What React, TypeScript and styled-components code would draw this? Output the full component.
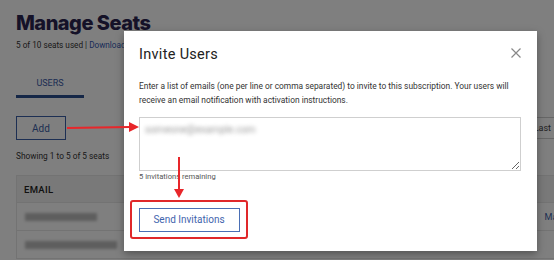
import React from "react";
import styled, { createGlobalStyle } from "styled-components";

const Global = createGlobalStyle`
  html, body { margin: 0; padding: 0; }
  body { font-family: "Roboto", "Liberation Sans", sans-serif; background: #fff; width: 554px; height: 260px; overflow: hidden; }
  * { box-sizing: border-box; }
`;

const Stage = styled.div`
  position: relative;
  width: 554px;
  height: 260px;
  overflow: hidden;
`;

const Page = styled.div`
  padding: 10px 16px 0 16px;
  display: flex;
  flex-direction: column;
  color: #222;
`;

const Title = styled.h1`
  margin: 0;
  font-family: "Inter", sans-serif;
  font-weight: 800;
  font-size: 20px;
  line-height: 26px;
  letter-spacing: -0.5px;
  color: #2b2550;
`;

const Meta = styled.div`
  margin-top: 3px;
  font-size: 8.2px;
  line-height: 12px;
  color: #333;
  a { color: #3358b0; text-decoration: none; }
`;

const Tabs = styled.div`
  margin-top: 26px;
  display: flex;
`;

const Tab = styled.div`
  width: 68px;
  padding: 0 0 6px;
  text-align: center;
  font-size: 9px;
  line-height: 12px;
  color: #3a5ca8;
  border-bottom: 3px solid #2a4f8f;
`;

const Toolbar = styled.div`
  margin-top: 18px;
  display: flex;
  justify-content: space-between;
  align-items: center;
`;

const OutlineButton = styled.button`
  width: 50px;
  height: 24px;
  background: #fff;
  border: 1px solid #3b5ea6;
  color: #3b5ea6;
  font-family: "Roboto", sans-serif;
  font-size: 10px;
  padding: 0;
`;

const PagerButton = styled.div`
  height: 22px;
  padding: 5px 6px;
  border: 1px solid #ccc;
  font-size: 9px;
  color: #444;
  margin-right: -20px;
`;

const Showing = styled.div`
  margin-top: 10px;
  font-size: 8.3px;
  line-height: 12px;
  color: #333;
`;

const TableCard = styled.div`
  margin-top: 13px;
  margin-right: -40px;
  border: 1px solid #e6e6e6;
  display: flex;
  flex-direction: column;
`;

const HeaderRow = styled.div`
  height: 26px;
  background: #f2f2f2;
  padding: 0 7px;
  display: flex;
  align-items: center;
  font-size: 9.5px;
  font-weight: 500;
  color: #222;
  letter-spacing: 0.3px;
`;

const Row = styled.div`
  height: 28px;
  border-top: 1px solid #e6e6e6;
  padding: 0 8px;
  display: flex;
  align-items: center;
  justify-content: space-between;
`;

const Blurred = styled.span<{ $w: number }>`
  display: inline-block;
  width: ${(p) => p.$w}px;
  height: 8px;
  background: #bdbdbd;
  filter: blur(1.5px);
`;

const Manage = styled.span`
  font-size: 9px;
  color: #3b5ea6;
  margin-right: -8px;
`;

const Overlay = styled.div`
  position: absolute;
  inset: 0;
  background: rgba(0, 0, 0, 0.5);
`;

const Modal = styled.div`
  position: absolute;
  left: 124px;
  top: 31px;
  width: 413px;
  height: 220px;
  background: #fff;
  box-shadow: 0 3px 8px rgba(0, 0, 0, 0.35);
  padding: 14px 16px 0 15px;
  display: flex;
  flex-direction: column;
`;

const ModalHead = styled.div`
  display: flex;
  justify-content: space-between;
  align-items: center;
`;

const ModalTitle = styled.h2`
  margin: 0;
  font-family: "Roboto", sans-serif;
  font-weight: 400;
  font-size: 14.5px;
  line-height: 20px;
  color: #222;
  letter-spacing: 0.3px;
`;

const Close = styled.button`
  border: 0;
  background: none;
  padding: 0;
  width: 12px;
  height: 12px;
  margin-right: -1px;
  margin-top: -5px;
  display: flex;
`;

const Desc = styled.p`
  margin: 14px 0 0;
  font-size: 8.4px;
  line-height: 14px;
  color: #333;
`;

const Area = styled.textarea`
  margin-top: 10px;
  width: 382px;
  height: 54px;
  border: 1px solid #cfcfcf;
  resize: vertical;
  padding: 6px 5px;
  font-family: "Roboto", sans-serif;
  font-size: 10px;
  color: transparent;
  text-shadow: 0 0 4px rgba(0, 0, 0, 0.4);
  outline: none;
`;

const Remaining = styled.div`
  margin-top: 1px;
  font-size: 7.6px;
  color: #555;
`;

const Highlight = styled.div`
  margin-top: 19px;
  margin-left: -9px;
  width: 118px;
  height: 39px;
  border: 2px solid #e0282a;
  border-radius: 3px;
  display: flex;
  align-items: center;
  justify-content: center;
`;

const PrimaryOutline = styled.button`
  width: 101px;
  height: 24px;
  background: #fff;
  border: 1px solid #4a6fb5;
  color: #3f64ad;
  font-family: "Roboto", sans-serif;
  font-size: 10px;
  padding: 0;
`;

const Annotation = styled.svg`
  position: absolute;
  left: 0;
  top: 0;
  pointer-events: none;
`;

export default function App() {
  return (
    <Stage>
      <Global />
      <Page>
        <Title>Manage Seats</Title>
        <Meta>
          5 of 10 seats used | <a>Download CSV</a>
        </Meta>
        <Tabs>
          <Tab>USERS</Tab>
        </Tabs>
        <Toolbar>
          <OutlineButton>Add</OutlineButton>
          <PagerButton>Last</PagerButton>
        </Toolbar>
        <Showing>Showing 1 to 5 of 5 seats</Showing>
        <TableCard>
          <HeaderRow>EMAIL</HeaderRow>
          <Row>
            <Blurred $w={72} />
            <Manage>Manage</Manage>
          </Row>
          <Row>
            <Blurred $w={92} />
          </Row>
        </TableCard>
      </Page>
      <Overlay />
      <Modal>
        <ModalHead>
          <ModalTitle>Invite Users</ModalTitle>
          <Close aria-label="Close">
            <svg width="12" height="12" viewBox="0 0 12 12">
              <path d="M1.5 1.5 L10.5 10.5 M10.5 1.5 L1.5 10.5" stroke="#888" strokeWidth="1.2" />
            </svg>
          </Close>
        </ModalHead>
        <Desc>
          Enter a list of emails (one per line or comma separated) to invite to this subscription. Your users will
          receive an email notification with activation instructions.
        </Desc>
        <Area defaultValue="someone@example.com" />
        <Remaining>5 invitations remaining</Remaining>
        <Highlight>
          <PrimaryOutline>Send Invitations</PrimaryOutline>
        </Highlight>
      </Modal>
      <Annotation width="554" height="260" viewBox="0 0 554 260">
        <line x1="67" y1="128" x2="130" y2="127" stroke="#e8262a" strokeWidth="2" />
        <polygon points="129,122 139,127 129,132" fill="#e8262a" />
        <line x1="179" y1="157" x2="179" y2="190" stroke="#e8262a" strokeWidth="2" />
        <polygon points="174,189 179,198 184,189" fill="#e8262a" />
      </Annotation>
    </Stage>
  );
}
